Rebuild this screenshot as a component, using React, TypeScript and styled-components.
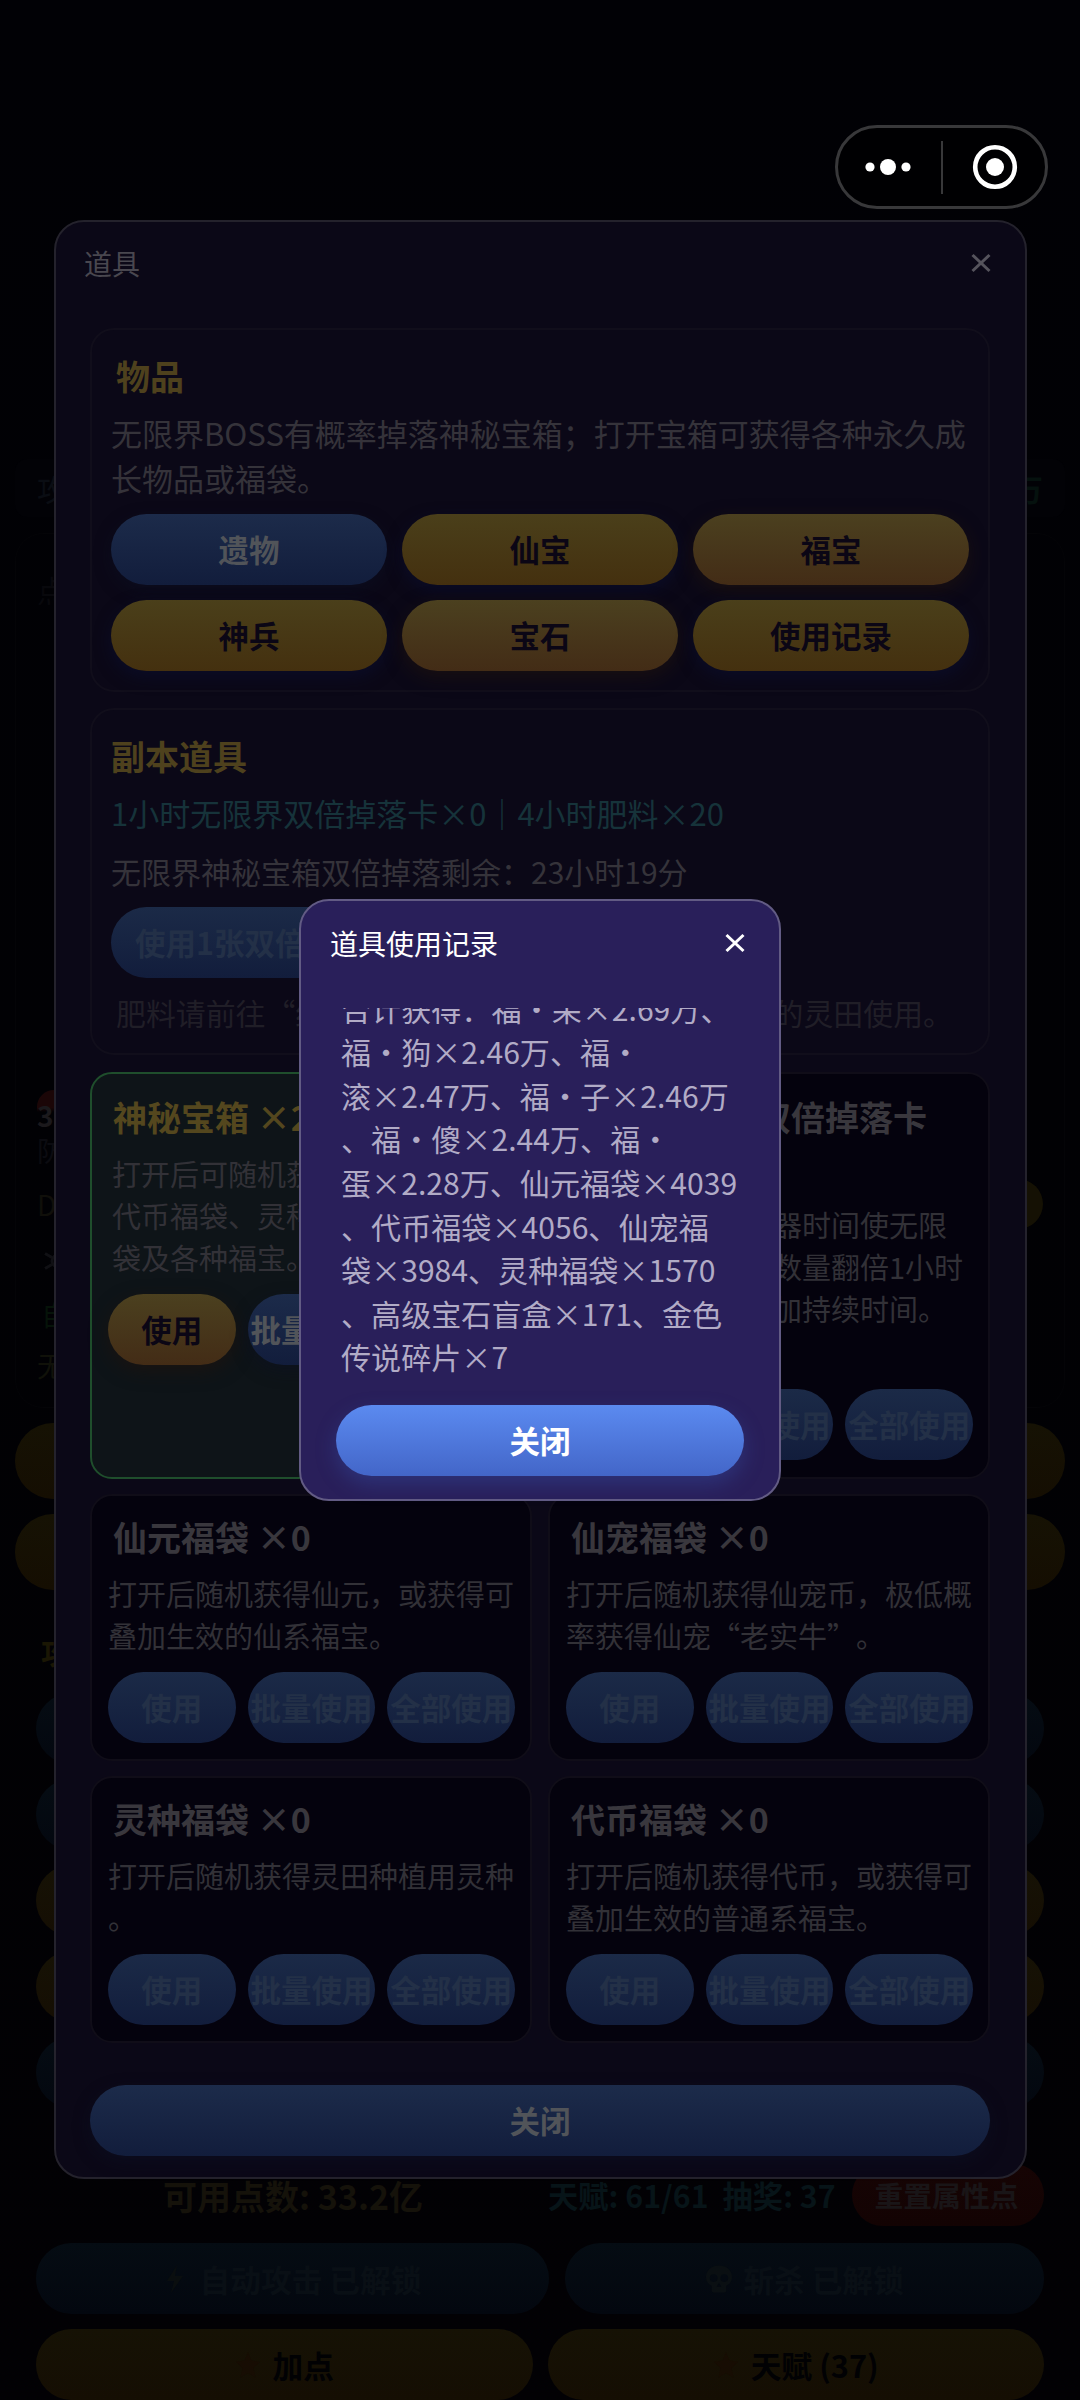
import React from "react";
import styled, { createGlobalStyle, css } from "styled-components";

const Global = createGlobalStyle`
  * { box-sizing: border-box; }
  html, body { margin: 0; padding: 0; background: #010104; }
  body { width: 1080px; height: 2400px; overflow: hidden; }
`;

const Screen = styled.div`
  position: relative;
  width: 1080px;
  height: 2400px;
  overflow: hidden;
  background: linear-gradient(180deg, #010105 0%, #010104 45%, #020104 100%);
  font-family: "Noto Sans CJK SC", "Noto Sans", sans-serif;
  text-spacing-trim: space-all;
  color: #fff;
`;

/* ---------- page behind the dialogs ---------- */

const Page = styled.div`
  display: flex;
  flex-direction: column;
  padding: 459px 15px 0;
  height: 2400px;
`;

const StatBar = styled.div`
  display: flex;
  justify-content: space-between;
  align-items: center;
  height: 58px;
  padding: 0 22px;
  border-radius: 12px;
  background: #020206;
  font-size: 30px;
  color: #0a0d13;
`;

const StatValue = styled.span`
  color: #05110e;
  font-weight: 700;
`;

const BossPanel = styled.div`
  display: flex;
  flex-direction: column;
  height: 876px;
  margin-top: 16px;
  padding: 26px 21px 0;
  border: 1px solid #040407;
  border-radius: 28px;
`;

const BossLabel = styled.div`
  height: 536px;
  font-size: 30px;
  line-height: 58px;
  color: #08080c;
`;

const Unit = styled.div<{ $color: string; $h: number; $bold?: boolean; $indent?: number }>`
  display: flex;
  align-items: center;
  justify-content: space-between;
  height: ${(p) => p.$h}px;
  padding-left: ${(p) => p.$indent ?? 0}px;
  font-size: 28px;
  font-weight: ${(p) => (p.$bold ? 700 : 400)};
  color: ${(p) => p.$color};
`;

const Count = styled.span`
  width: 34px;
  height: 44px;
  line-height: 50px;
  border-radius: 20px;
  background: linear-gradient(180deg, #1b0607 40%, transparent 50%);
`;

const SmallPill = styled.span`
  width: 120px;
  height: 50px;
  border-radius: 25px;
  background: #151104;
`;

const WidePill = styled.div`
  flex: none;
  height: 76px;
  margin-top: 15px;
  border-radius: 38px;
  background: linear-gradient(180deg, #161204, #150e02);
`;

const SkillPanel = styled.div`
  display: flex;
  flex-direction: column;
  flex: none;
  height: 506px;
  margin-top: 15px;
  padding: 24px 21px 0;
  border-radius: 28px;
`;

const SkillTitle = styled.div`
  height: 48px;
  margin-bottom: 16px;
  padding-left: 5px;
  font-size: 30px;
  font-weight: 700;
  line-height: 44px;
  color: #1a1604;
`;

const fills = {
  gold: css`
    background: linear-gradient(180deg, #161205, #150e03);
    color: #010103;
  `,
  teal: css`
    background: linear-gradient(180deg, #050c13, #03070f);
    color: #090f15;
  `,
};

const PagePill = styled.div<{ $fill: "gold" | "teal"; $w?: number }>`
  display: flex;
  align-items: center;
  justify-content: center;
  gap: 10px;
  flex: ${(p) => (p.$w ? "none" : "1 1 0")};
  ${(p) => p.$w && `width: ${p.$w}px;`}
  height: 71px;
  border-radius: 36px;
  font-size: 30.7px;
  font-weight: 700;
  white-space: pre;
  ${(p) => fills[p.$fill]}
`;

const SkillList = styled.div`
  display: flex;
  flex-direction: column;
  gap: 15px;
  height: 413px;
  & > div { flex: none; }
`;

const PointsRow = styled.div`
  display: flex;
  align-items: center;
  flex: none;
  height: 62px;
  margin: 53px 21px 0;
  font-weight: 700;
  white-space: pre;
`;

const Points = styled.div`
  width: 512px;
  padding-left: 127px;
  font-size: 34px;
  color: #15120a;
`;

const Talent = styled.div`
  width: 304px;
  font-size: 30.3px;
  color: #071418;
  display: flex;
  gap: 14px;
`;

const Reset = styled.div`
  width: 192px;
  height: 62px;
  padding-right: 3px;
  border-radius: 31px;
  background: linear-gradient(180deg, #160404, #130303);
  font-size: 28.8px;
  line-height: 62px;
  text-align: center;
  color: #191517;
`;

const PillRow = styled.div<{ $mt: number; $gap: number }>`
  display: flex;
  flex: none;
  gap: ${(p) => p.$gap}px;
  margin: ${(p) => p.$mt}px 21px 0;
`;

/* ---------- mini-program capsule ---------- */

const Capsule = styled.div`
  position: absolute;
  left: 835px;
  top: 125px;
  display: flex;
  align-items: center;
  justify-content: space-between;
  width: 213px;
  height: 84px;
  padding: 0 27px;
  border: 3px solid #38383a;
  border-radius: 42px;
  background: #000002;
`;

const Divider = styled.div`
  width: 2px;
  height: 53px;
  background: #38383a;
`;

/* ---------- items modal ---------- */

const Modal = styled.section`
  position: absolute;
  left: 54px;
  top: 220px;
  width: 973px;
  height: 1959px;
  padding: 0 35px 0 34px;
  display: flex;
  flex-direction: column;
  border: 2px solid #24222c;
  border-radius: 30px;
  background: #0b0817;
`;

const ModalHeader = styled.header`
  display: flex;
  align-items: center;
  justify-content: space-between;
  flex: none;
  height: 82px;
  margin: 0 -1px 24px -6px;
  font-size: 28px;
  color: #49474f;
`;

const Panel = styled.div`
  flex: none;
  display: flex;
  flex-direction: column;
  margin-bottom: 16px;
  padding: 22px 19px 19px;
  border: 2px solid #110e1b;
  border-radius: 24px;
`;

const Heading = styled.h2<{ $indent?: number }>`
  margin: 0 0 0 ${(p) => p.$indent ?? 0}px;
  font-size: 34px;
  line-height: 48px;
  font-weight: 700;
  color: #4e411d;
`;

const Text = styled.p<{ $size: number; $mt: number; $color: string; $indent?: number }>`
  margin: ${(p) => p.$mt}px 0 0 ${(p) => p.$indent ?? 0}px;
  font-size: ${(p) => p.$size}px;
  line-height: 44.5px;
  color: ${(p) => p.$color};
  white-space: pre;
`;

const tones = {
  blue: css`
    background: linear-gradient(180deg, #1c2b4a, #121d3c);
    color: #515459;
    box-shadow: 0 6px 16px #0b0f2480;
  `,
  disabled: css`
    background: linear-gradient(180deg, #1b2a47, #121d3c);
    color: #233047;
  `,
  gold: css`
    background: linear-gradient(180deg, #4a3f1a, #44300f);
    color: #0b0615;
    box-shadow: 0 6px 16px #0b0c26;
  `,
  amber: css`
    background: linear-gradient(180deg, #4b401f, #432c16);
    color: #0b0615;
    box-shadow: 0 6px 18px #20140eaa;
  `,
  bright: css`
    background: linear-gradient(180deg, #5b8af0, #4366c8);
    color: #fff;
    box-shadow: 0 8px 20px #3550a866;
  `,
};

type Tone = keyof typeof tones;

const Button = styled.button<{ $tone: Tone }>`
  flex: none;
  display: flex;
  align-items: center;
  justify-content: center;
  min-width: 0;
  height: 70.5px;
  padding: 0;
  border: 0;
  border-radius: 36px;
  font-family: inherit;
  font-size: 30.5px;
  font-weight: 700;
  white-space: nowrap;
  ${(p) => tones[p.$tone]}
`;

const Doubler = styled(Button)`
  align-self: flex-start;
  margin-top: 14px;
  padding: 0 24px;
`;

const CategoryGrid = styled.div`
  display: grid;
  grid-template-columns: repeat(3, 1fr);
  gap: 15.5px 15px;
  margin-top: 14px;
  margin-bottom: 0.5px;
`;

const CardGrid = styled.div`
  display: grid;
  grid-template-columns: repeat(2, 1fr);
  grid-template-rows: 407px 267px 267px;
  gap: 15px 16px;
  margin-top: 1px;
`;

const Card = styled.article<{ $active?: boolean; $roomy?: boolean }>`
  display: flex;
  flex-direction: column;
  min-width: 0;
  padding: ${(p) => (p.$roomy ? 17 : 15)}px 15px 0 16px;
  border: 2px solid ${(p) => (p.$active ? "#1f4e2c" : "#100d18")};
  border-radius: 22px;
  background: ${(p) => (p.$active ? "#0e1418" : "#04020d")};
`;

const CardTitle = styled.h3<{ $active?: boolean; $indent?: number }>`
  margin: 0 0 10px ${(p) => p.$indent ?? 5}px;
  font-size: 34px;
  line-height: 51px;
  font-weight: 700;
  white-space: pre-line;
  color: ${(p) => (p.$active ? "#54471e" : "#39373d")};
`;

const CardText = styled.p<{ $indent: number; $lines: number }>`
  margin: 0 0 16px ${(p) => p.$indent}px;
  min-height: ${(p) => p.$lines * 42}px;
  font-size: 29px;
  line-height: 42px;
  white-space: pre;
  color: #323137;
`;

const Actions = styled.div`
  display: grid;
  grid-template-columns: repeat(3, minmax(0, 1fr));
  gap: 12px;
`;

const CloseAll = styled(Button)`
  margin-top: 42px;
`;

/* ---------- usage log dialog ---------- */

const Dialog = styled.section`
  position: absolute;
  left: 299px;
  top: 899px;
  width: 482px;
  height: 602px;
  display: flex;
  flex-direction: column;
  padding: 0 35px;
  border: 2px solid #625b84;
  border-radius: 30px;
  background: #291f5a;
`;

const DialogHeader = styled.header`
  display: flex;
  align-items: center;
  justify-content: space-between;
  flex: none;
  height: 83px;
  margin: 0 -1px 0 -6px;
  font-size: 28px;
  color: #fff;
`;

const LogView = styled.div`
  display: flex;
  flex-direction: column;
  justify-content: flex-end;
  flex: none;
  height: 371px;
  margin-top: 24px;
  padding-left: 5px;
  overflow: hidden;
`;

const LogLine = styled.div`
  flex: none;
  height: 43.6px;
  font-size: 30.1px;
  line-height: 43.6px;
  white-space: pre;
  color: #b1abc6;
`;

const Confirm = styled(Button)`
  margin: 26px 0 0;
`;

const Cross = ({ color }: { color: string }) => (
  <svg width="20" height="20" viewBox="0 0 20 20">
    <path d="M1.5 2 18.5 18M18.5 2 1.5 18" stroke={color} strokeWidth="3" fill="none" />
  </svg>
);

const Bolt = () => (
  <svg width="26" height="30" viewBox="0 0 26 30">
    <path d="M13 1 3 17h7L7 29 19 12h-8z" fill="#0a0e0f" />
  </svg>
);

const Skull = () => (
  <svg width="28" height="30" viewBox="0 0 29 30">
    <path
      fillRule="evenodd"
      d="M14.5 1C6 1 1 6.500 1 13c0 5 3 8 6 9v5c0 1.500 1 2 2 2h11c1 0 2-.5 2-2v-5c3-1 6-4 6-9 0-6.500-5-12-13.500-12zM9 10a4 4 0 1 1 0 8 4 4 0 0 1 0-8zm11 0a4 4 0 1 1 0 8 4 4 0 0 1 0-8zm-5.500 9 2.500 4h-5z"
      fill="#0a0f12"
    />
  </svg>
);

const Spark = () => (
  <svg width="28" height="28" viewBox="0 0 28 28">
    <path d="M13 1l3.500 8.500L25 11l-6.500 6 2 9.500L13 22l-7.500 4.500 2-9.500L1 11l8.500-1.500z" fill="#170d03" />
  </svg>
);

const Snow = () => (
  <svg width="34" height="34" viewBox="0 0 34 34" fill="none" stroke="#101014" strokeWidth="3">
    <circle cx="17" cy="17" r="6" />
    <path d="M17 2v8M17 24v8M4 9.500l7 4M23 20.500l7 4M30 9.500l-7 4M11 20.500l-7 4" />
  </svg>
);

const categories: { name: string; tone: Tone }[] = [
  { name: "遗物", tone: "blue" },
  { name: "仙宝", tone: "gold" },
  { name: "福宝", tone: "amber" },
  { name: "神兵", tone: "gold" },
  { name: "宝石", tone: "amber" },
  { name: "使用记录", tone: "gold" },
];

type Item = {
  title: string;
  text: string;
  active?: boolean;
  roomy?: boolean;
  titleIndent?: number;
  lines: number;
};

const items: Item[] = [
  {
    title: "神秘宝箱 ×2",
    text: "打开后可随机获得仙元、\n代币福袋、灵种、仙宠福\n袋及各种福宝。",
    active: true,
    roomy: true,
    lines: 3,
  },
  {
    title: "1小时无限界双倍掉落卡\n×0",
    text: "使用后将按服务器时间使无限\n界神秘宝箱掉落数量翻倍1小时\n，可重复使用叠加持续时间。",
    roomy: true,
    titleIndent: 1,
    lines: 4.05,
  },
  { title: "仙元福袋 ×0", text: "打开后随机获得仙元，或获得可\n叠加生效的仙系福宝。", lines: 2 },
  { title: "仙宠福袋 ×0", text: "打开后随机获得仙宠币，极低概\n率获得仙宠“老实牛”。", lines: 2 },
  { title: "灵种福袋 ×0", text: "打开后随机获得灵田种植用灵种\n。", lines: 2 },
  { title: "代币福袋 ×0", text: "打开后随机获得代币，或获得可\n叠加生效的普通系福宝。", lines: 2 },
];

const log = [
  "合计获得：福·呆×2.69万、",
  "福·狗×2.46万、福·",
  "滚×2.47万、福·子×2.46万",
  "、福·傻×2.44万、福·",
  "蛋×2.28万、仙元福袋×4039",
  "、代币福袋×4056、仙宠福",
  "袋×3984、灵种福袋×1570",
  "、高级宝石盲盒×171、金色",
  "传说碎片×7",
];

const ItemCard = ({ item }: { item: Item }) => (
  <Card $active={item.active} $roomy={item.roomy}>
    <CardTitle $active={item.active} $indent={item.titleIndent}>
      {item.title}
    </CardTitle>
    <CardText $indent={item.roomy ? 4 : 0} $lines={item.lines}>
      {item.text}
    </CardText>
    <Actions>
      <Button $tone={item.active ? "amber" : "disabled"}>使用</Button>
      <Button $tone={item.active ? "blue" : "disabled"}>批量使用</Button>
      <Button $tone={item.active ? "blue" : "disabled"}>全部使用</Button>
    </Actions>
  </Card>
);

export default function App() {
  return (
    <Screen lang="zh-CN">
      <Global />
      <Page>
        <StatBar>
          <span>攻</span>
          <StatValue>万</StatValue>
        </StatBar>
        <BossPanel>
          <BossLabel>点</BossLabel>
          <Unit $color="#1b191c" $h={32} $bold>
            <Count>3</Count>
          </Unit>
          <Unit $color="#0b0b10" $h={44}>防</Unit>
          <Unit $color="#100f0a" $h={64}>
            <span>D</span>
            <SmallPill />
          </Unit>
          <Unit $color="#101014" $h={50} $indent={4}>
            <Snow />
          </Unit>
          <Unit $color="#061309" $h={56} $indent={4}>自</Unit>
          <Unit $color="#101109" $h={46}>无</Unit>
        </BossPanel>
        <WidePill />
        <WidePill />
        <SkillPanel>
          <SkillTitle>攻</SkillTitle>
          <SkillList>
            <PagePill $fill="teal" />
            <PagePill $fill="teal" />
            <PagePill $fill="gold" />
            <PagePill $fill="gold" />
            <PagePill $fill="teal" />
          </SkillList>
        </SkillPanel>
        <PointsRow>
          <Points>可用点数: 33.2亿</Points>
          <Talent>
            <span>天赋: 61/61</span>
            <span>抽奖: 37</span>
          </Talent>
          <Reset>重置属性点</Reset>
        </PointsRow>
        <PillRow $mt={17} $gap={16}>
          <PagePill $fill="teal" $w={513}>
            <Bolt />
            自动攻击 已解锁
          </PagePill>
          <PagePill $fill="teal">
            <Skull />
            斩杀 已解锁
          </PagePill>
        </PillRow>
        <PillRow $mt={15} $gap={15}>
          <PagePill $fill="gold">
            <Spark />
            加点
          </PagePill>
          <PagePill $fill="gold">
            <Spark />
            天赋 (37)
          </PagePill>
        </PillRow>
      </Page>

      <Modal>
        <ModalHeader>
          <span>道具</span>
          <Cross color="#55535c" />
        </ModalHeader>
        <Panel>
          <Heading $indent={5}>物品</Heading>
          <Text $size={31} $mt={11} $color="#35333a">
            {"无限界BOSS有概率掉落神秘宝箱；打开宝箱可获得各种永久成\n长物品或福袋。"}
          </Text>
          <CategoryGrid>
            {categories.map((c) => (
              <Button key={c.name} $tone={c.tone}>
                {c.name}
              </Button>
            ))}
          </CategoryGrid>
        </Panel>
        <Panel>
          <Heading>副本道具</Heading>
          <Text $size={31} $mt={11} $color="#16333a">
            1小时无限界双倍掉落卡×0｜4小时肥料×20
          </Text>
          <Text $size={30} $mt={13} $color="#35333a">
            无限界神秘宝箱双倍掉落剩余：23小时19分
          </Text>
          <Doubler $tone="disabled">使用1张双倍卡</Doubler>
          <Text $size={29.9} $mt={12} $color="#201e27" $indent={5}>
            肥料请前往“红尘界面中的灵田功能页，在已种植的灵田使用。
          </Text>
        </Panel>
        <CardGrid>
          {items.map((item) => (
            <ItemCard key={item.title} item={item} />
          ))}
        </CardGrid>
        <CloseAll $tone="blue">关闭</CloseAll>
      </Modal>

      <Dialog>
        <DialogHeader>
          <span>道具使用记录</span>
          <Cross color="#ffffff" />
        </DialogHeader>
        <LogView>
          {log.map((line) => (
            <LogLine key={line}>{line}</LogLine>
          ))}
        </LogView>
        <Confirm $tone="bright">关闭</Confirm>
      </Dialog>

      <Capsule>
        <svg width="46" height="18" viewBox="0 0 46 18" fill="#fff">
          <circle cx="5" cy="9" r="4.600" />
          <circle cx="23" cy="9" r="8" />
          <circle cx="41" cy="9" r="4.600" />
        </svg>
        <Divider />
        <svg width="46" height="46" viewBox="0 0 46 46">
          <circle cx="23" cy="23" r="19.800" fill="none" stroke="#fff" strokeWidth="4.600" />
          <circle cx="23" cy="23" r="9" fill="#fff" />
        </svg>
      </Capsule>
    </Screen>
  );
}
